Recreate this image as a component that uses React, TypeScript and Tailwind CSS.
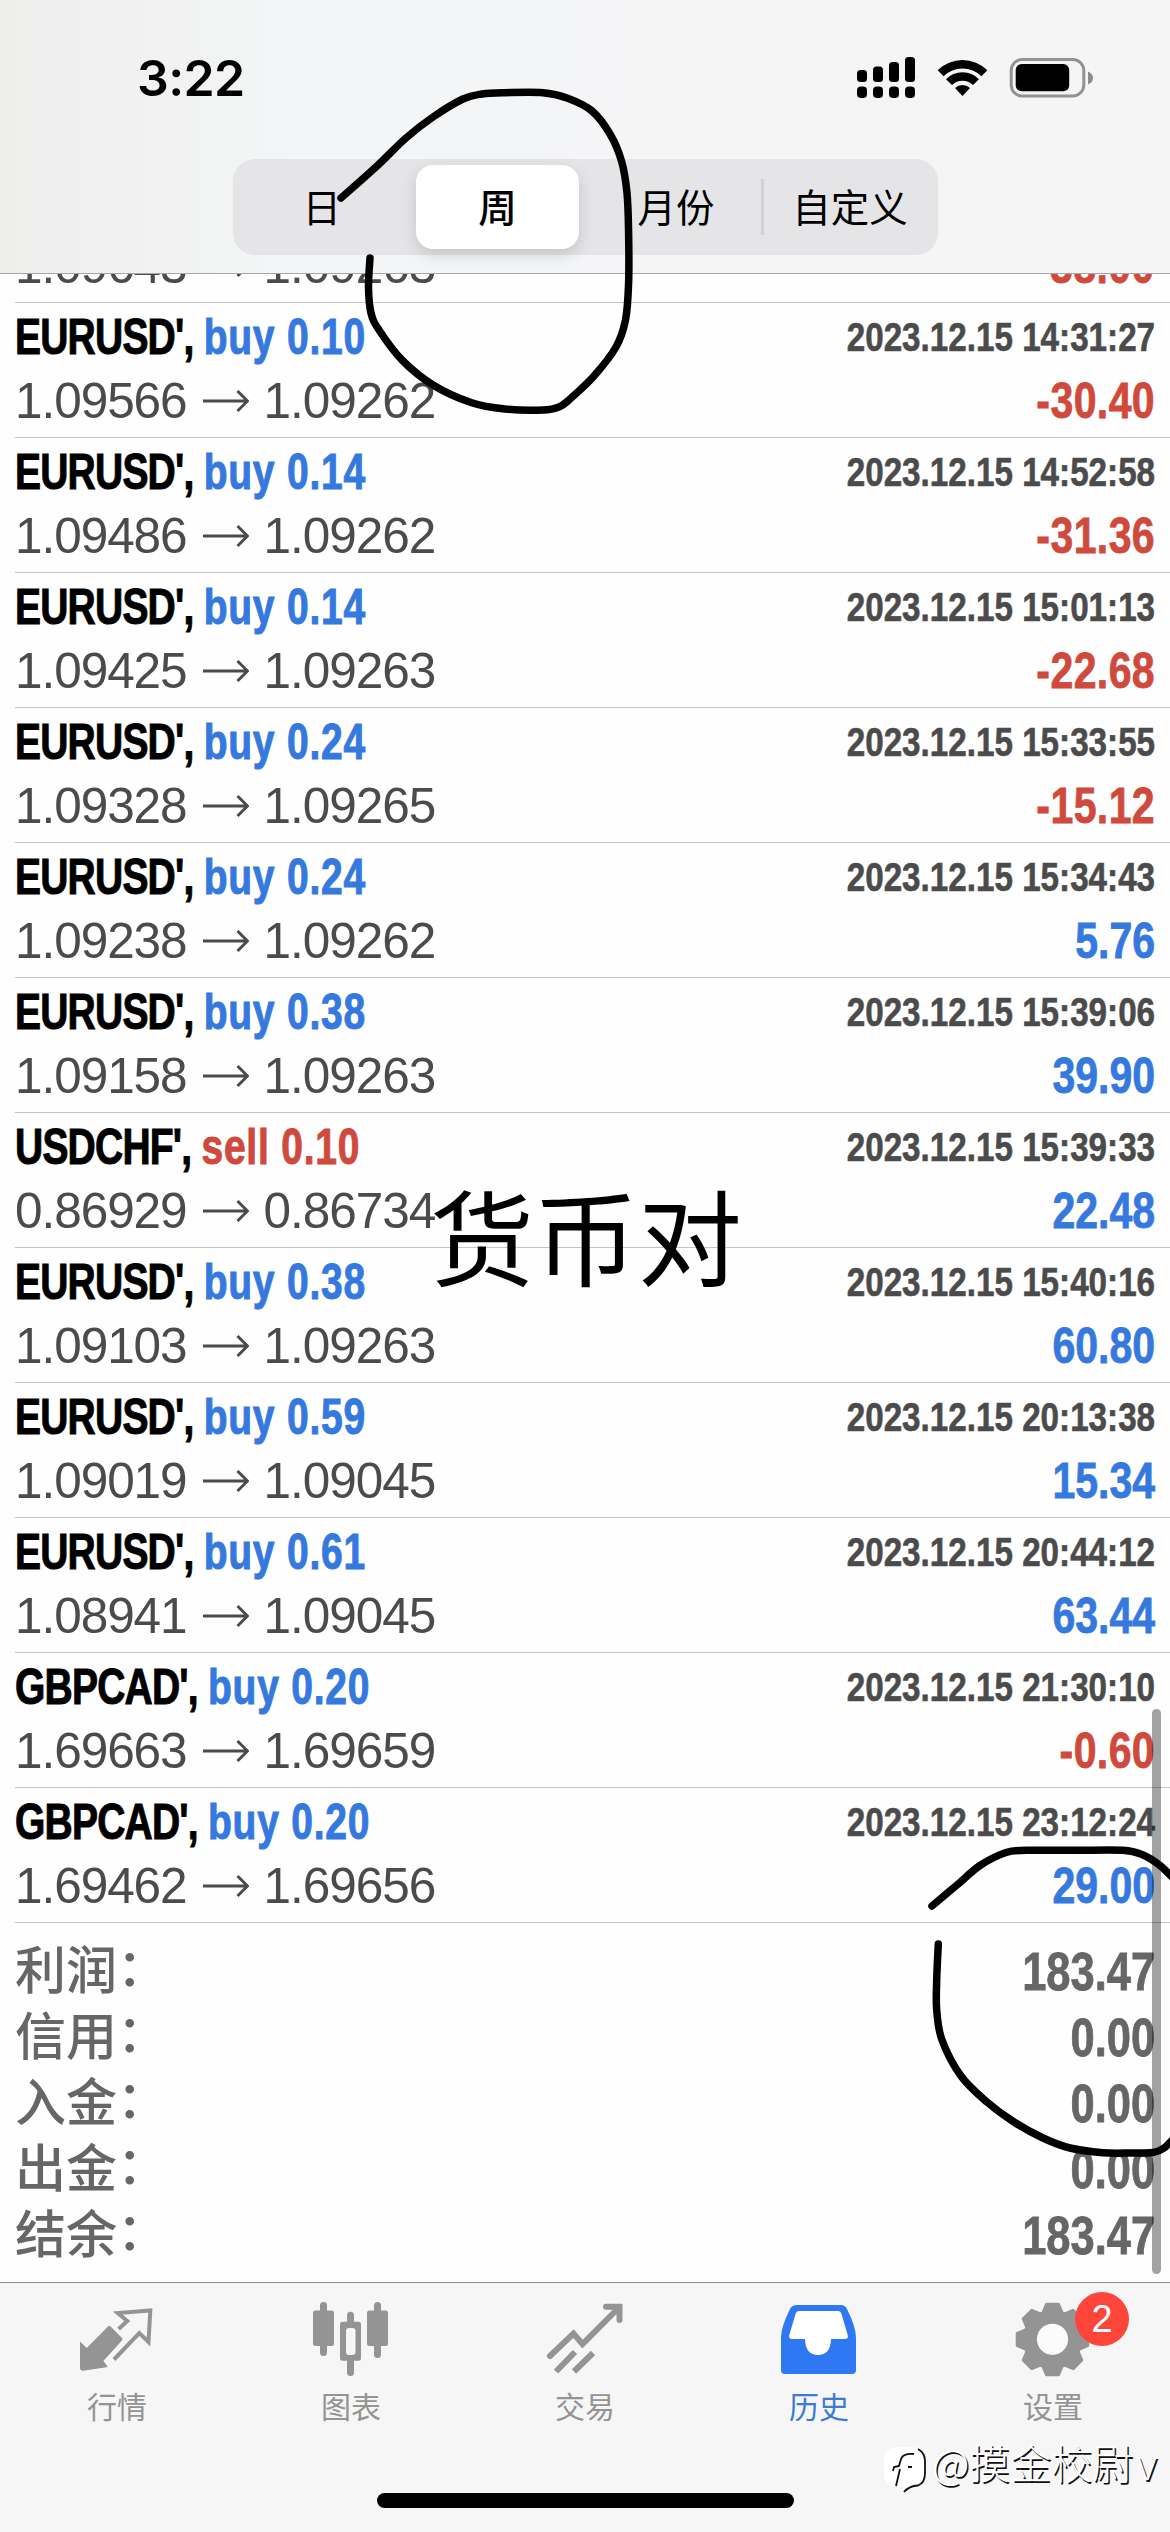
import clsx from "clsx";
import type { ReactNode } from "react";

type Point = [number, number];

interface Deal {
  symbol: string;
  side: "buy" | "sell";
  volume: string;
  open: string;
  close: string;
  time: string;
  profit: string;
}

const deals: Deal[] = [
  { symbol: "EURUSD'", side: "buy", volume: "0.10", open: "1.09566", close: "1.09262", time: "2023.12.15 14:31:27", profit: "-30.40" },
  { symbol: "EURUSD'", side: "buy", volume: "0.14", open: "1.09486", close: "1.09262", time: "2023.12.15 14:52:58", profit: "-31.36" },
  { symbol: "EURUSD'", side: "buy", volume: "0.14", open: "1.09425", close: "1.09263", time: "2023.12.15 15:01:13", profit: "-22.68" },
  { symbol: "EURUSD'", side: "buy", volume: "0.24", open: "1.09328", close: "1.09265", time: "2023.12.15 15:33:55", profit: "-15.12" },
  { symbol: "EURUSD'", side: "buy", volume: "0.24", open: "1.09238", close: "1.09262", time: "2023.12.15 15:34:43", profit: "5.76" },
  { symbol: "EURUSD'", side: "buy", volume: "0.38", open: "1.09158", close: "1.09263", time: "2023.12.15 15:39:06", profit: "39.90" },
  { symbol: "USDCHF'", side: "sell", volume: "0.10", open: "0.86929", close: "0.86734", time: "2023.12.15 15:39:33", profit: "22.48" },
  { symbol: "EURUSD'", side: "buy", volume: "0.38", open: "1.09103", close: "1.09263", time: "2023.12.15 15:40:16", profit: "60.80" },
  { symbol: "EURUSD'", side: "buy", volume: "0.59", open: "1.09019", close: "1.09045", time: "2023.12.15 20:13:38", profit: "15.34" },
  { symbol: "EURUSD'", side: "buy", volume: "0.61", open: "1.08941", close: "1.09045", time: "2023.12.15 20:44:12", profit: "63.44" },
  { symbol: "GBPCAD'", side: "buy", volume: "0.20", open: "1.69663", close: "1.69659", time: "2023.12.15 21:30:10", profit: "-0.60" },
  { symbol: "GBPCAD'", side: "buy", volume: "0.20", open: "1.69462", close: "1.69656", time: "2023.12.15 23:12:24", profit: "29.00" },
];

const totals = [
  { label: "利润", value: "183.47" },
  { label: "信用", value: "0.00" },
  { label: "入金", value: "0.00" },
  { label: "出金", value: "0.00" },
  { label: "结余", value: "183.47" },
];

const periods = ["日", "周", "月份", "自定义"];

const periodLoop: Point[] = [
  [341, 198], [377, 166], [406, 138], [433, 117], [463, 99], [482, 94], [505, 92.7], [543, 92.7], [567, 98],
  [592, 111], [610, 134], [621.5, 161], [627, 193], [628.6, 233], [628.6, 283], [625.5, 320], [616, 347],
  [594, 376], [570, 399], [559, 407], [543, 410], [505, 409], [471, 402.5], [433, 385], [402, 360], [379, 330],
  [371, 313], [368.5, 287], [370, 258],
];

const profitLoopTop: Point[] = [
  [932, 1906], [957, 1885], [980, 1865.5], [1006, 1852.5], [1027, 1850.3], [1075, 1850.3], [1123, 1850.3],
  [1143, 1855], [1160, 1865.5], [1176, 1881],
];

const profitLoopBottom: Point[] = [
  [938.3, 1944], [936.7, 1980], [936.7, 2010], [942, 2040], [961, 2076], [987, 2102], [1014, 2122], [1043, 2138],
  [1070, 2148], [1103, 2152.7], [1130, 2153], [1153, 2152.5], [1164, 2148], [1176, 2136],
];

// Catmull-Rom through the points, written as cubic beziers
function smoothPath(points: Point[]) {
  let d = `M${points[0][0]} ${points[0][1]}`;
  for (let i = 0; i < points.length - 1; i++) {
    const p0 = points[i - 1] ?? points[i];
    const p1 = points[i];
    const p2 = points[i + 1];
    const p3 = points[i + 2] ?? p2;
    d += `C${p1[0] + (p2[0] - p0[0]) / 6} ${p1[1] + (p2[1] - p0[1]) / 6} ${p2[0] - (p3[0] - p1[0]) / 6} ${
      p2[1] - (p3[1] - p1[1]) / 6
    } ${p2[0]} ${p2[1]}`;
  }
  return d;
}

function gearPath(cx: number, cy: number) {
  const points: string[] = [];
  for (let i = 0; i < 8; i++) {
    const base = (i * Math.PI) / 4 - Math.PI / 2;
    const corners = [
      [-0.34, 28.5],
      [-0.17, 35.8],
      [0.17, 35.8],
      [0.34, 28.5],
    ];
    corners.forEach(([a, r]) => {
      points.push(`${cx + r * Math.cos(base + a)} ${cy + r * Math.sin(base + a)}`);
    });
  }
  return `M${points.join("L")}Z`;
}

function StatusBar() {
  return (
    <div className="flex h-[159px] items-start justify-between pt-[48px] pr-[76px] pl-[137px]">
      <span className="font-['Inter',sans-serif] text-[50px] leading-[60px] font-semibold tracking-[-0.6px] text-black">
        3:22
      </span>
      <svg className="mt-[8px] h-[44px] w-[238px]" viewBox="855 56 238 44">
        {[70, 66.5, 62, 57].map((top, i) => (
          <g key={top}>
            <rect x={856 + i * 16} y={top} width="10" height={82 - top} rx="3.5" />
            <rect x={856 + i * 16} y="86.5" width="10" height="11.5" rx="4" />
          </g>
        ))}
        <path d="M936.6 70.2a35.5 35.5 0 0 1 49.8 0l-6 6a27 27 0 0 0-37.8 0z" />
        <path d="M945 79.2a23.2 23.2 0 0 1 33 0l-6 5.8a15 15 0 0 0-21 0z" />
        <path d="M954 88a11 11 0 0 1 15 0l-7.5 8z" />
        <rect x="1010.2" y="59.5" width="72.6" height="36.5" rx="11" fill="none" stroke="#929293" strokeWidth="3" />
        <rect x="1014.7" y="64" width="53.5" height="27.3" rx="6" />
        <path d="M1087 71.5q5 2 5 6.5t-5 6.5z" fill="#8b8b8c" />
      </svg>
    </div>
  );
}

function PeriodSwitch() {
  return (
    <div className="ml-[233px] flex h-[96px] w-[705px] rounded-[22px] bg-[#e5e5e7] px-px py-[6px] font-['Noto_Sans_CJK_SC',sans-serif] text-[38.5px] leading-[81px] text-black">
      {periods.map((period, i) => (
        <div
          key={period}
          className={clsx(
            "relative mx-[6px] w-[164px] whitespace-nowrap",
            i < 2 && "text-center",
            i === 1 && "rounded-[17px] bg-white font-medium shadow-[0_6px_16px_rgba(0,0,0,0.14)]",
            i === 2 && "pl-[46px]",
            i === 3 && "pl-[25px]",
          )}
        >
          {period}
          {i === 3 && <span className="absolute top-[14px] -left-[6px] h-[56px] w-[3px] bg-[#d2d2d5]" />}
        </div>
      ))}
    </div>
  );
}

function Prices({ open, close }: { open: string; close: string }) {
  return (
    <div className="flex items-center font-['Liberation_Sans',sans-serif] text-[49.5px] tracking-[-1.05px] text-[#4b4b4c]">
      <span>{open}</span>
      <svg className="mr-[15px] ml-[16px] h-[24px] w-[46px]" viewBox="0 0 46 24" fill="none" stroke="currentColor" strokeWidth="3">
        <path d="M0 12H44M34.5 2L44.5 12L34.5 22" />
      </svg>
      <span>{close}</span>
    </div>
  );
}

function Profit({ value }: { value: string }) {
  return (
    <div
      className={clsx(
        "origin-right scale-x-82 font-['Liberation_Sans',sans-serif] text-[50px] font-bold [-webkit-text-stroke:0.8px]",
        value.startsWith("-") ? "tracking-[0.5px] text-[#cf4a3d]" : "text-[#3579df]",
      )}
    >
      {value}
    </div>
  );
}

function DealRow({ deal }: { deal: Deal }) {
  return (
    <div className="ml-[15px] flex h-[135px] shrink-0 justify-between border-b border-[#c6c6c8] pt-[2px] pr-[15px] leading-[64px]">
      <div>
        <div className="w-[354px] origin-left scale-x-78 font-['Liberation_Sans',sans-serif] text-[50px] font-bold whitespace-pre [-webkit-text-stroke:1px]">
          <span className="tracking-[-1px] text-black">{deal.symbol}, </span>
          <span className={clsx("tracking-[1px]", deal.side === "buy" ? "text-[#3579df]" : "text-[#cf4a3d]")}>
            {deal.side} {deal.volume}
          </span>
        </div>
        <Prices open={deal.open} close={deal.close} />
      </div>
      <div className="text-right">
        <div className="origin-right scale-x-82 font-['Liberation_Sans',sans-serif] text-[40.5px] font-bold text-[#4b4b4c] [-webkit-text-stroke:0.6px]">
          {deal.time}
        </div>
        <Profit value={deal.profit} />
      </div>
    </div>
  );
}

// The row scrolled under the header: only the foot of its second line is in view
function ScrolledRow() {
  return (
    <div className="ml-[15px] flex h-[29px] shrink-0 items-end justify-between overflow-hidden border-b border-[#c6c6c8] pr-[15px] pb-[4px] leading-[64px]">
      <Prices open="1.09643" close="1.09263" />
      <Profit value="-38.00" />
    </div>
  );
}

function Totals() {
  return (
    <div className="h-[359px] shrink-0 px-[15px] pt-[16px] text-[#666667]">
      {totals.map(({ label, value }) => (
        <div key={label} className="flex h-[66px] justify-between leading-[66px]">
          <span className="font-['Noto_Sans_CJK_SC',sans-serif] text-[51px] leading-[57px] font-medium">
            {label}
            <span className="inline-block -translate-y-[3px]">：</span>
          </span>
          <span className="origin-right scale-x-82 font-['Liberation_Sans',sans-serif] text-[53px] font-bold [-webkit-text-stroke:0.8px]">
            {value}
          </span>
        </div>
      ))}
    </div>
  );
}

// Each icon is drawn in a 90x80 box whose top edge is the same for every tab
function TabIcon({ x, children }: { x: number; children: ReactNode }) {
  return (
    <svg className="h-[80px] w-[90px]" viewBox={`${x} 2300 90 80`} fill="currentColor">
      {children}
    </svg>
  );
}

const tabs = [
  {
    label: "行情",
    icon: (
      <TabIcon x={72}>
        <path d="M80 2341.5L86.7 2348L108.3 2326.2Q109.3 2325.4 110.3 2326.2L122 2338Q123 2339.3 122 2340.5L103.3 2361L107.3 2366Q107.5 2367 106.5 2367.3L83 2370.7Q80 2370.7 80 2368Z" />
        <path
          d="M118.6 2329l8.7-8-9.5-8 32.5-2.5-1.8 31.5-9.2-9-25.3 26.5"
          fill="none"
          stroke="currentColor"
          strokeWidth="4"
        />
      </TabIcon>
    ),
  },
  {
    label: "图表",
    icon: (
      <TabIcon x={306}>
        <rect x="313" y="2310.5" width="21" height="35.5" rx="2.5" />
        <rect x="320" y="2302" width="7" height="54" rx="3.5" />
        <rect x="340" y="2321.7" width="21" height="39" rx="2.5" />
        <rect x="347" y="2311.7" width="7" height="64.3" rx="3.5" />
        <rect x="346" y="2328" width="9.5" height="27" rx="3" fill="#f6f6f6" />
        <rect x="367" y="2310.5" width="21" height="35.5" rx="2.5" />
        <rect x="374" y="2302" width="7" height="56" rx="3.5" />
      </TabIcon>
    ),
  },
  {
    label: "交易",
    icon: (
      <TabIcon x={540}>
        <g fill="none" stroke="currentColor" strokeWidth="6">
          <path d="M550 2356L573.5 2333.5L582.5 2344L619 2307.5" strokeLinecap="round" />
          <path d="M606 2306.7H619.5V2320" strokeLinecap="round" />
          <path d="M556 2371.5L575 2352M574 2371.5L593 2353" />
        </g>
      </TabIcon>
    ),
  },
  {
    label: "历史",
    active: true,
    icon: (
      <TabIcon x={774}>
        <path d="M797 2305H841Q845 2305 847 2309Q856 2327 856 2338V2370Q856 2374 852 2374H785Q781 2374 781 2370V2338Q781 2327 790 2309Q792 2305 797 2305Z" />
        <path
          d="M799 2311Q796.5 2311 795.5 2314L789.3 2335Q788.5 2339 792 2339H805Q805.5 2355 818 2355Q830.5 2355 831 2339H845Q848.7 2339 847.7 2335L841.5 2314Q840.5 2311 838 2311Z"
          fill="#fff"
        />
      </TabIcon>
    ),
  },
  {
    label: "设置",
    badge: 2,
    icon: (
      <TabIcon x={1008}>
        <path d={gearPath(1052.5, 2339.5)} stroke="currentColor" strokeWidth="3" strokeLinejoin="round" />
        <circle cx="1052.5" cy="2339.3" r="15.6" fill="#fbfbfb" />
      </TabIcon>
    ),
  },
];

function TabBar() {
  return (
    <div className="flex h-[250px] shrink-0 border-t border-[#8e8e90] bg-[#f6f6f6]">
      {tabs.map((tab) => (
        <div
          key={tab.label}
          className={clsx("relative flex flex-1 flex-col items-center pt-[17px]", tab.active ? "text-[#2f78f3]" : "text-[#949494]")}
        >
          {tab.icon}
          <span className={clsx("mt-[5px] font-['Noto_Sans_CJK_SC',sans-serif] text-[30px] leading-[40px]", tab.active && "text-[#3b7bd6]")}>
            {tab.label}
          </span>
          {tab.badge && (
            <span className="absolute top-[9px] left-[139px] flex h-[54px] w-[54px] items-center justify-center rounded-full bg-[#fd453a] font-['Liberation_Sans',sans-serif] text-[38px] leading-none text-white">
              {tab.badge}
            </span>
          )}
        </div>
      ))}
    </div>
  );
}

function Watermark() {
  return (
    <div className="absolute top-[2435px] left-[883px] flex items-start font-['Noto_Sans_CJK_SC',sans-serif] text-[41px] leading-[52px] font-light whitespace-nowrap text-white [text-shadow:1.5px_1.5px_0_#111]">
      <svg className="mt-[9px] mr-[5px] h-[50px] w-[44px]" viewBox="883 2444 44 50" fill="none">
        <path d="M899 2447H911Q924 2447 924 2460V2473Q924 2486 912 2487L904 2492V2487H897Q884 2486 884 2473V2461Q884 2447 899 2447Z" fill="#fff" />
        <g stroke="#111" strokeWidth="1.8">
          <path d="M918 2449Q925 2453 925 2461V2473Q925 2483 918 2485.5Q909 2486 904 2492" />
          <path d="M914 2454Q904 2453 901.5 2458Q900 2462 899 2466L894 2467L893 2471M900 2469L896 2486M908 2467h4" />
        </g>
      </svg>
      @摸金校尉
      <span className="ml-[3px] text-[43px]">v</span>
    </div>
  );
}

export default function App() {
  return (
    <div className="relative flex h-[2532px] w-[1170px] flex-col overflow-hidden bg-[#fefefe]">
      <header className="h-[274px] shrink-0 border-b border-[#a8a8ab] bg-linear-to-r from-[#eeeeed] via-[#f4f5f6] via-25% to-[#f5f5f6]">
        <StatusBar />
        <PeriodSwitch />
      </header>
      <main className="flex min-h-0 flex-1 flex-col">
        <ScrolledRow />
        {deals.map((deal) => (
          <DealRow key={deal.time} deal={deal} />
        ))}
        <Totals />
      </main>
      <TabBar />

      <div className="absolute top-[1709px] left-[1152px] h-[565px] w-[9px] rounded-full bg-black/36" />
      <div className="absolute top-[2493px] left-[377px] h-[15px] w-[417px] rounded-full bg-black" />
      <div className="absolute top-[1169px] left-[430px] font-['Noto_Sans_CJK_SC',sans-serif] text-[104px] leading-[130px] text-black">
        货币对
      </div>
      <svg className="absolute top-0 left-0 h-[2532px] w-[1170px]" viewBox="0 0 1170 2532" fill="none" stroke="#000" strokeWidth="7.5" strokeLinecap="round">
        <path d={smoothPath(periodLoop)} />
        <path d={smoothPath(profitLoopTop)} />
        <path d={smoothPath(profitLoopBottom)} />
      </svg>
      <Watermark />
    </div>
  );
}
